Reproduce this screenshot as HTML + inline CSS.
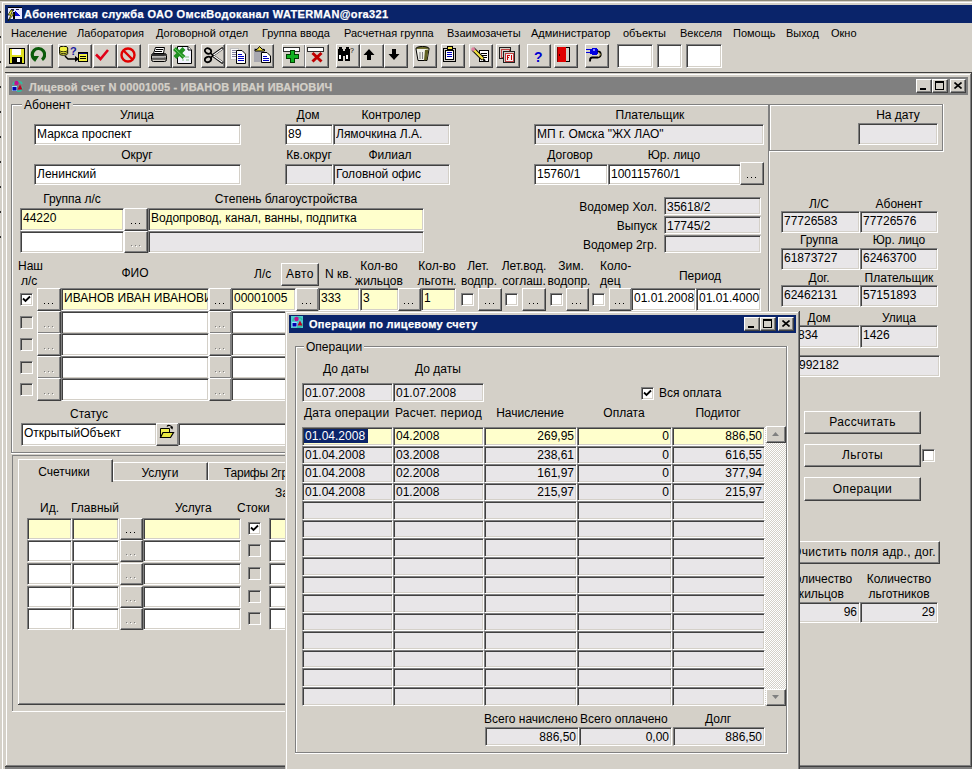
<!DOCTYPE html>
<html><head><meta charset="utf-8"><style>
*{margin:0;padding:0;box-sizing:border-box}
html,body{width:972px;height:769px;overflow:hidden}
body{position:relative;background:#d4d0c8;font-family:"Liberation Sans",sans-serif;font-size:12px;color:#000}
body div, body svg{position:absolute}
.t{white-space:nowrap}
.ed{border-style:solid;border-width:1px;border-color:#808080 #fff #fff #808080;box-shadow:inset 1px 1px #404040, inset -1px -1px #d4d0c8;overflow:hidden}
.ed span{position:absolute}
.bt{background:#d4d0c8;border-style:solid;border-width:1px;border-color:#fff #404040 #404040 #fff;box-shadow:inset -1px -1px #808080}
.cb{width:13px;height:13px;border-style:solid;border-width:1px;border-color:#808080 #fff #fff #808080;box-shadow:inset 1px 1px #404040, inset -1px -1px #d4d0c8}
</style></head><body>
<div style="left:0px;top:0px;width:972px;height:1px;background:#8c8878"></div>
<div style="left:1px;top:1px;width:971px;height:1px;background:#d4d0c8"></div>
<div style="left:2px;top:2px;width:970px;height:1px;background:#ffffff"></div>
<div style="left:1px;top:1px;width:1px;height:768px;background:#d4d0c8"></div>
<div style="left:2px;top:2px;width:1px;height:767px;background:#ffffff"></div>
<div style="left:0px;top:11px;width:1px;height:2px;background:#303030"></div>
<div style="left:0px;top:36px;width:1px;height:2px;background:#303030"></div>
<div style="left:0px;top:61px;width:1px;height:2px;background:#303030"></div>
<div style="left:0px;top:86px;width:1px;height:2px;background:#303030"></div>
<div style="left:0px;top:111px;width:1px;height:2px;background:#303030"></div>
<div style="left:0px;top:136px;width:1px;height:2px;background:#303030"></div>
<div style="left:0px;top:161px;width:1px;height:2px;background:#303030"></div>
<div style="left:0px;top:186px;width:1px;height:2px;background:#303030"></div>
<div style="left:0px;top:211px;width:1px;height:2px;background:#303030"></div>
<div style="left:0px;top:236px;width:1px;height:2px;background:#303030"></div>
<div style="left:5px;top:5px;width:967px;height:18px;background:#0a246a"></div>
<div class="t" style="left:24px;top:8px;font-size:11px;line-height:13px;color:#fff;font-weight:bold;-webkit-text-stroke:0.25px #fff;letter-spacing:0.38px">Абонентская служба ОАО ОмскВодоканал WATERMAN@ora321</div>
<div class="t" style="left:11px;top:27px;font-size:11px;line-height:13px;color:#000;">Население</div>
<div class="t" style="left:77px;top:27px;font-size:11px;line-height:13px;color:#000;">Лаборатория</div>
<div class="t" style="left:156px;top:27px;font-size:11px;line-height:13px;color:#000;">Договорной отдел</div>
<div class="t" style="left:262px;top:27px;font-size:11px;line-height:13px;color:#000;">Группа ввода</div>
<div class="t" style="left:344px;top:27px;font-size:11px;line-height:13px;color:#000;">Расчетная группа</div>
<div class="t" style="left:447px;top:27px;font-size:11px;line-height:13px;color:#000;">Взаимозачеты</div>
<div class="t" style="left:531px;top:27px;font-size:11px;line-height:13px;color:#000;">Администратор</div>
<div class="t" style="left:623px;top:27px;font-size:11px;line-height:13px;color:#000;">объекты</div>
<div class="t" style="left:680px;top:27px;font-size:11px;line-height:13px;color:#000;">Векселя</div>
<div class="t" style="left:733px;top:27px;font-size:11px;line-height:13px;color:#000;">Помощь</div>
<div class="t" style="left:786px;top:27px;font-size:11px;line-height:13px;color:#000;">Выход</div>
<div class="t" style="left:831px;top:27px;font-size:11px;line-height:13px;color:#000;">Окно</div>
<div class="bt" style="left:5px;top:44px;width:24px;height:24px"></div>
<div class="bt" style="left:29px;top:44px;width:24px;height:24px"></div>
<div class="bt" style="left:58px;top:44px;width:34px;height:24px"></div>
<div class="bt" style="left:93px;top:44px;width:24px;height:24px"></div>
<div class="bt" style="left:117px;top:44px;width:24px;height:24px"></div>
<div class="bt" style="left:148px;top:44px;width:24px;height:24px"></div>
<div class="bt" style="left:172px;top:44px;width:24px;height:24px"></div>
<div class="bt" style="left:201px;top:44px;width:24px;height:24px"></div>
<div class="bt" style="left:226px;top:44px;width:24px;height:24px"></div>
<div class="bt" style="left:250px;top:44px;width:24px;height:24px"></div>
<div class="bt" style="left:282px;top:44px;width:24px;height:24px"></div>
<div class="bt" style="left:305px;top:44px;width:24px;height:24px"></div>
<div class="bt" style="left:336px;top:44px;width:24px;height:24px"></div>
<div class="bt" style="left:360px;top:44px;width:24px;height:24px"></div>
<div class="bt" style="left:384px;top:44px;width:24px;height:24px"></div>
<div class="bt" style="left:413px;top:44px;width:24px;height:24px"></div>
<div class="bt" style="left:441px;top:44px;width:24px;height:24px"></div>
<div class="bt" style="left:469px;top:44px;width:24px;height:24px"></div>
<div class="bt" style="left:496px;top:44px;width:24px;height:24px"></div>
<div class="bt" style="left:527px;top:44px;width:24px;height:24px"></div>
<div class="bt" style="left:554px;top:44px;width:24px;height:24px"></div>
<div class="bt" style="left:585px;top:44px;width:24px;height:24px"></div>
<div class="ed" style="left:617px;top:44px;width:36px;height:24px;background:#ffffff"></div>
<div class="ed" style="left:657px;top:44px;width:25px;height:24px;background:#ffffff"></div>
<div class="ed" style="left:686px;top:44px;width:36px;height:24px;background:#ffffff"></div>
<div style="left:5px;top:72px;width:967px;height:1px;background:#404040"></div>
<div style="left:5px;top:767px;width:967px;height:2px;background:#808080"></div>
<div style="left:5px;top:73px;width:967px;height:1px;background:#d4d0c8"></div>
<div style="left:5px;top:73px;width:1px;height:694px;background:#d4d0c8"></div>
<div style="left:6px;top:74px;width:965px;height:1px;background:#ffffff"></div>
<div style="left:6px;top:74px;width:1px;height:692px;background:#ffffff"></div>
<div style="left:5px;top:766px;width:967px;height:1px;background:#404040"></div>
<div style="left:971px;top:73px;width:1px;height:694px;background:#404040"></div>
<div style="left:6px;top:765px;width:965px;height:1px;background:#808080"></div>
<div style="left:970px;top:74px;width:1px;height:692px;background:#808080"></div>
<div style="left:7px;top:75px;width:963px;height:1px;background:#d4d0c8"></div>
<div style="left:9px;top:77px;width:959px;height:18px;background:#808080"></div>
<div class="t" style="left:29px;top:81px;font-size:11px;line-height:13px;color:#d4d0c8;font-weight:bold;-webkit-text-stroke:0.25px #d4d0c8;letter-spacing:0.18px">Лицевой счет N 00001005 - ИВАНОВ ИВАН ИВАНОВИЧ</div>
<div class="bt" style="left:916px;top:79px;width:16px;height:14px"></div>
<div style="left:920px;top:88px;width:6px;height:2px;background:#000"></div>
<div class="bt" style="left:932px;top:79px;width:16px;height:14px"></div>
<div style="left:935px;top:81px;width:9px;height:2px;background:#000"></div>
<div style="left:935px;top:81px;width:1px;height:9px;background:#000"></div>
<div style="left:943px;top:81px;width:1px;height:9px;background:#000"></div>
<div style="left:935px;top:89px;width:9px;height:1px;background:#000"></div>
<div class="bt" style="left:950px;top:79px;width:16px;height:14px"></div>
<svg style="position:absolute;left:954px;top:82px" width="8" height="7" viewBox="0 0 8 7"><path d="M0.5 0.5 L7.5 6.5 M7.5 0.5 L0.5 6.5" stroke="#000" stroke-width="1.6" fill="none"/></svg>
<div style="left:11px;top:104px;width:758px;height:1px;background:#808080"></div>
<div style="left:11px;top:104px;width:1px;height:349px;background:#808080"></div>
<div style="left:11px;top:452px;width:758px;height:1px;background:#808080"></div>
<div style="left:768px;top:104px;width:1px;height:349px;background:#808080"></div>
<div style="left:12px;top:105px;width:756px;height:1px;background:#ffffff"></div>
<div style="left:12px;top:105px;width:1px;height:347px;background:#ffffff"></div>
<div style="left:11px;top:453px;width:759px;height:1px;background:#ffffff"></div>
<div style="left:769px;top:104px;width:1px;height:350px;background:#ffffff"></div>
<div class="t" style="left:22px;top:98px;padding:0 2px;background:#d4d0c8;font-size:12px;line-height:14px">Абонент</div>
<div class="t" style="left:-13px;width:300px;text-align:center;top:108px;font-size:12px;line-height:14px;color:#000;">Улица</div>
<div class="ed" style="left:34px;top:124px;width:207px;height:21px;background:#ffffff"><span style="position:absolute;left:2px;right:0;top:2px;height:14px;line-height:14px;text-align:left;white-space:nowrap;overflow:hidden;padding-right:0px;font-size:12px;">Маркса проспект</span></div>
<div class="t" style="left:-13px;width:300px;text-align:center;top:148px;font-size:12px;line-height:14px;color:#000;">Округ</div>
<div class="ed" style="left:34px;top:164px;width:207px;height:21px;background:#ffffff"><span style="position:absolute;left:2px;right:0;top:2px;height:14px;line-height:14px;text-align:left;white-space:nowrap;overflow:hidden;padding-right:0px;font-size:12px;">Ленинский</span></div>
<div class="t" style="left:158px;width:300px;text-align:center;top:108px;font-size:12px;line-height:14px;color:#000;">Дом</div>
<div class="ed" style="left:285px;top:124px;width:48px;height:21px;background:#ffffff"><span style="position:absolute;left:2px;right:0;top:2px;height:14px;line-height:14px;text-align:left;white-space:nowrap;overflow:hidden;padding-right:0px;font-size:12px;">89</span></div>
<div class="t" style="left:241px;width:300px;text-align:center;top:108px;font-size:12px;line-height:14px;color:#000;">Контролер</div>
<div class="ed" style="left:333px;top:124px;width:117px;height:21px;background:#e8e6e8"><span style="position:absolute;left:2px;right:0;top:2px;height:14px;line-height:14px;text-align:left;white-space:nowrap;overflow:hidden;padding-right:0px;font-size:12px;">Лямочкина Л.А.</span></div>
<div class="t" style="left:159px;width:300px;text-align:center;top:148px;font-size:12px;line-height:14px;color:#000;">Кв.округ</div>
<div class="ed" style="left:285px;top:164px;width:48px;height:21px;background:#e8e6e8"></div>
<div class="t" style="left:240px;width:300px;text-align:center;top:148px;font-size:12px;line-height:14px;color:#000;">Филиал</div>
<div class="ed" style="left:333px;top:164px;width:117px;height:21px;background:#e8e6e8"><span style="position:absolute;left:2px;right:0;top:2px;height:14px;line-height:14px;text-align:left;white-space:nowrap;overflow:hidden;padding-right:0px;font-size:12px;">Головной офис</span></div>
<div class="t" style="left:500px;width:300px;text-align:center;top:108px;font-size:12px;line-height:14px;color:#000;">Плательщик</div>
<div class="ed" style="left:534px;top:124px;width:230px;height:21px;background:#e8e6e8"><span style="position:absolute;left:2px;right:0;top:2px;height:14px;line-height:14px;text-align:left;white-space:nowrap;overflow:hidden;padding-right:0px;font-size:12px;">МП г. Омска &quot;ЖХ ЛАО&quot;</span></div>
<div class="t" style="left:420px;width:300px;text-align:center;top:148px;font-size:12px;line-height:14px;color:#000;">Договор</div>
<div class="ed" style="left:534px;top:164px;width:74px;height:21px;background:#ffffff"><span style="position:absolute;left:2px;right:0;top:2px;height:14px;line-height:14px;text-align:left;white-space:nowrap;overflow:hidden;padding-right:0px;font-size:12px;">15760/1</span></div>
<div class="t" style="left:524px;width:300px;text-align:center;top:148px;font-size:12px;line-height:14px;color:#000;">Юр. лицо</div>
<div class="ed" style="left:608px;top:164px;width:133px;height:21px;background:#ffffff"><span style="position:absolute;left:2px;right:0;top:2px;height:14px;line-height:14px;text-align:left;white-space:nowrap;overflow:hidden;padding-right:0px;font-size:12px;">100115760/1</span></div>
<div class="bt" style="left:740px;top:162px;width:24px;height:23px"></div>
<div style="left:747px;top:177px;width:1px;height:1px;background:#000"></div>
<div style="left:751px;top:177px;width:1px;height:1px;background:#000"></div>
<div style="left:755px;top:177px;width:1px;height:1px;background:#000"></div>
<div style="left:769px;top:104px;width:175px;height:48px;background:#d4d0c8"></div>
<div style="left:769px;top:104px;width:174px;height:1px;background:#808080"></div>
<div style="left:769px;top:104px;width:1px;height:47px;background:#808080"></div>
<div style="left:769px;top:150px;width:174px;height:1px;background:#808080"></div>
<div style="left:942px;top:104px;width:1px;height:47px;background:#808080"></div>
<div style="left:770px;top:105px;width:172px;height:1px;background:#ffffff"></div>
<div style="left:770px;top:105px;width:1px;height:45px;background:#ffffff"></div>
<div style="left:769px;top:151px;width:175px;height:1px;background:#ffffff"></div>
<div style="left:943px;top:104px;width:1px;height:48px;background:#ffffff"></div>
<div class="t" style="left:748px;width:300px;text-align:center;top:108px;font-size:12px;line-height:14px;color:#000;">На дату</div>
<div class="ed" style="left:858px;top:123px;width:80px;height:22px;background:#e8e6e8"></div>
<div class="t" style="left:-78px;width:300px;text-align:center;top:192px;font-size:12px;line-height:14px;color:#000;">Группа л/с</div>
<div class="t" style="left:136px;width:300px;text-align:center;top:192px;font-size:12px;line-height:14px;color:#000;">Степень благоустройства</div>
<div class="ed" style="left:20px;top:208px;width:104px;height:23px;background:#ffffcc"><span style="position:absolute;left:2px;right:0;top:2px;height:14px;line-height:14px;text-align:left;white-space:nowrap;overflow:hidden;padding-right:0px;font-size:12px;">44220</span></div>
<div class="bt" style="left:124px;top:208px;width:24px;height:23px"></div>
<div style="left:131px;top:223px;width:1px;height:1px;background:#000"></div>
<div style="left:135px;top:223px;width:1px;height:1px;background:#000"></div>
<div style="left:139px;top:223px;width:1px;height:1px;background:#000"></div>
<div class="ed" style="left:148px;top:208px;width:276px;height:23px;background:#ffffcc"><span style="position:absolute;left:2px;right:0;top:2px;height:14px;line-height:14px;text-align:left;white-space:nowrap;overflow:hidden;padding-right:0px;font-size:12px;">Водопровод, канал, ванны, подпитка</span></div>
<div class="ed" style="left:20px;top:231px;width:104px;height:22px;background:#ffffff"></div>
<div class="bt" style="left:124px;top:231px;width:24px;height:22px"></div>
<div style="left:131px;top:245px;width:1px;height:1px;background:#808080"></div>
<div style="left:132px;top:246px;width:1px;height:1px;background:#fff"></div>
<div style="left:135px;top:245px;width:1px;height:1px;background:#808080"></div>
<div style="left:136px;top:246px;width:1px;height:1px;background:#fff"></div>
<div style="left:139px;top:245px;width:1px;height:1px;background:#808080"></div>
<div style="left:140px;top:246px;width:1px;height:1px;background:#fff"></div>
<div class="ed" style="left:148px;top:231px;width:276px;height:22px;background:#e8e6e8"></div>
<div class="t" style="left:357px;width:300px;text-align:right;top:200px;font-size:12px;line-height:14px;color:#000;">Водомер Хол.</div>
<div class="ed" style="left:664px;top:197px;width:97px;height:18px;background:#e8e6e8"><span style="position:absolute;left:2px;right:0;top:2px;height:14px;line-height:14px;text-align:left;white-space:nowrap;overflow:hidden;padding-right:0px;font-size:12px;">35618/2</span></div>
<div class="t" style="left:357px;width:300px;text-align:right;top:219px;font-size:12px;line-height:14px;color:#000;">Выпуск</div>
<div class="ed" style="left:664px;top:216px;width:97px;height:18px;background:#e8e6e8"><span style="position:absolute;left:2px;right:0;top:2px;height:14px;line-height:14px;text-align:left;white-space:nowrap;overflow:hidden;padding-right:0px;font-size:12px;">17745/2</span></div>
<div class="t" style="left:357px;width:300px;text-align:right;top:238px;font-size:12px;line-height:14px;color:#000;">Водомер 2гр.</div>
<div class="ed" style="left:664px;top:235px;width:97px;height:18px;background:#e8e6e8"></div>
<div class="t" style="left:18px;top:259px;font-size:12px;line-height:14px;color:#000;">Наш</div>
<div class="t" style="left:21px;top:274px;font-size:12px;line-height:14px;color:#000;">л/с</div>
<div class="t" style="left:-15px;width:300px;text-align:center;top:266px;font-size:12px;line-height:14px;color:#000;">ФИО</div>
<div class="t" style="left:254px;top:267px;font-size:12px;line-height:14px;color:#000;">Л/с</div>
<div class="bt" style="left:281px;top:263px;width:38px;height:23px"><span style="position:absolute;left:0;right:0;top:0;height:21px;line-height:21px;text-align:center;white-space:nowrap;color:#000;font-size:12px;letter-spacing:0.4px">Авто</span></div>
<div class="t" style="left:325px;top:267px;font-size:12px;line-height:14px;color:#000;">N кв.</div>
<div class="t" style="left:229px;width:300px;text-align:center;top:259px;font-size:12px;line-height:14px;color:#000;">Кол-во</div>
<div class="t" style="left:229px;width:300px;text-align:center;top:274px;font-size:12px;line-height:14px;color:#000;">жильцов</div>
<div class="t" style="left:287px;width:300px;text-align:center;top:259px;font-size:12px;line-height:14px;color:#000;">Кол-во</div>
<div class="t" style="left:287px;width:300px;text-align:center;top:274px;font-size:12px;line-height:14px;color:#000;">льготн.</div>
<div class="t" style="left:328px;width:300px;text-align:center;top:259px;font-size:12px;line-height:14px;color:#000;">Лет.</div>
<div class="t" style="left:329px;width:300px;text-align:center;top:274px;font-size:12px;line-height:14px;color:#000;">водпр.</div>
<div class="t" style="left:374px;width:300px;text-align:center;top:259px;font-size:12px;line-height:14px;color:#000;">Лет.вод.</div>
<div class="t" style="left:374px;width:300px;text-align:center;top:274px;font-size:12px;line-height:14px;color:#000;">соглаш.</div>
<div class="t" style="left:421px;width:300px;text-align:center;top:259px;font-size:12px;line-height:14px;color:#000;">Зим.</div>
<div class="t" style="left:419px;width:300px;text-align:center;top:274px;font-size:12px;line-height:14px;color:#000;">водопр.</div>
<div class="t" style="left:600px;top:259px;font-size:12px;line-height:14px;color:#000;">Коло-</div>
<div class="t" style="left:600px;top:274px;font-size:12px;line-height:14px;color:#000;">дец</div>
<div class="t" style="left:550px;width:300px;text-align:center;top:269px;font-size:12px;line-height:14px;color:#000;">Период</div>
<div class="cb" style="left:20px;top:293px;background:#ffffff"></div>
<svg style="position:absolute;left:22px;top:295px" width="9" height="9" viewBox="0 0 9 9"><path d="M1 3.5 L3.5 6 L8 1.5" stroke="#000" stroke-width="1.8" fill="none"/></svg>
<div class="bt" style="left:37px;top:288px;width:24px;height:23px"></div>
<div style="left:44px;top:303px;width:1px;height:1px;background:#000"></div>
<div style="left:48px;top:303px;width:1px;height:1px;background:#000"></div>
<div style="left:52px;top:303px;width:1px;height:1px;background:#000"></div>
<div class="ed" style="left:61px;top:288px;width:148px;height:23px;background:#ffffcc"><span style="position:absolute;left:2px;right:0;top:2px;height:14px;line-height:14px;text-align:left;white-space:nowrap;overflow:hidden;padding-right:0px;font-size:12px;">ИВАНОВ ИВАН ИВАНОВИЧ</span></div>
<div class="bt" style="left:209px;top:288px;width:23px;height:23px"></div>
<div style="left:215px;top:303px;width:1px;height:1px;background:#000"></div>
<div style="left:219px;top:303px;width:1px;height:1px;background:#000"></div>
<div style="left:223px;top:303px;width:1px;height:1px;background:#000"></div>
<div class="ed" style="left:231px;top:288px;width:65px;height:23px;background:#ffffcc"><span style="position:absolute;left:2px;right:0;top:2px;height:14px;line-height:14px;text-align:left;white-space:nowrap;overflow:hidden;padding-right:0px;font-size:12px;">00001005</span></div>
<div class="bt" style="left:296px;top:288px;width:23px;height:23px"></div>
<div style="left:302px;top:303px;width:1px;height:1px;background:#000"></div>
<div style="left:306px;top:303px;width:1px;height:1px;background:#000"></div>
<div style="left:310px;top:303px;width:1px;height:1px;background:#000"></div>
<div class="ed" style="left:318px;top:288px;width:42px;height:23px;background:#ffffcc"><span style="position:absolute;left:2px;right:0;top:2px;height:14px;line-height:14px;text-align:left;white-space:nowrap;overflow:hidden;padding-right:0px;font-size:12px;">333</span></div>
<div class="ed" style="left:360px;top:288px;width:39px;height:23px;background:#ffffcc"><span style="position:absolute;left:2px;right:0;top:2px;height:14px;line-height:14px;text-align:left;white-space:nowrap;overflow:hidden;padding-right:0px;font-size:12px;">3</span></div>
<div class="bt" style="left:398px;top:288px;width:23px;height:23px"></div>
<div style="left:404px;top:303px;width:1px;height:1px;background:#000"></div>
<div style="left:408px;top:303px;width:1px;height:1px;background:#000"></div>
<div style="left:412px;top:303px;width:1px;height:1px;background:#000"></div>
<div class="ed" style="left:421px;top:288px;width:35px;height:23px;background:#ffffcc"><span style="position:absolute;left:2px;right:0;top:2px;height:14px;line-height:14px;text-align:left;white-space:nowrap;overflow:hidden;padding-right:0px;font-size:12px;">1</span></div>
<div class="cb" style="left:461px;top:293px;background:#ffffff"></div>
<div class="bt" style="left:478px;top:288px;width:24px;height:23px"></div>
<div style="left:485px;top:303px;width:1px;height:1px;background:#000"></div>
<div style="left:489px;top:303px;width:1px;height:1px;background:#000"></div>
<div style="left:493px;top:303px;width:1px;height:1px;background:#000"></div>
<div class="cb" style="left:505px;top:293px;background:#ffffff"></div>
<div class="bt" style="left:522px;top:288px;width:24px;height:23px"></div>
<div style="left:529px;top:303px;width:1px;height:1px;background:#000"></div>
<div style="left:533px;top:303px;width:1px;height:1px;background:#000"></div>
<div style="left:537px;top:303px;width:1px;height:1px;background:#000"></div>
<div class="cb" style="left:550px;top:293px;background:#ffffff"></div>
<div class="bt" style="left:566px;top:288px;width:23px;height:23px"></div>
<div style="left:572px;top:303px;width:1px;height:1px;background:#000"></div>
<div style="left:576px;top:303px;width:1px;height:1px;background:#000"></div>
<div style="left:580px;top:303px;width:1px;height:1px;background:#000"></div>
<div class="cb" style="left:592px;top:293px;background:#ffffff"></div>
<div class="bt" style="left:609px;top:288px;width:23px;height:23px"></div>
<div style="left:615px;top:303px;width:1px;height:1px;background:#000"></div>
<div style="left:619px;top:303px;width:1px;height:1px;background:#000"></div>
<div style="left:623px;top:303px;width:1px;height:1px;background:#000"></div>
<div class="ed" style="left:631px;top:288px;width:65px;height:23px;background:#ffffff"><span style="position:absolute;left:2px;right:0;top:2px;height:14px;line-height:14px;text-align:left;white-space:nowrap;overflow:hidden;padding-right:0px;font-size:12px;">01.01.2008</span></div>
<div class="ed" style="left:696px;top:288px;width:65px;height:23px;background:#ffffff"><span style="position:absolute;left:2px;right:0;top:2px;height:14px;line-height:14px;text-align:left;white-space:nowrap;overflow:hidden;padding-right:0px;font-size:12px;">01.01.4000</span></div>
<div class="cb" style="left:20px;top:316px;background:#d4d0c8"></div>
<div class="bt" style="left:37px;top:311px;width:24px;height:23px"></div>
<div style="left:44px;top:326px;width:1px;height:1px;background:#808080"></div>
<div style="left:45px;top:327px;width:1px;height:1px;background:#fff"></div>
<div style="left:48px;top:326px;width:1px;height:1px;background:#808080"></div>
<div style="left:49px;top:327px;width:1px;height:1px;background:#fff"></div>
<div style="left:52px;top:326px;width:1px;height:1px;background:#808080"></div>
<div style="left:53px;top:327px;width:1px;height:1px;background:#fff"></div>
<div class="ed" style="left:61px;top:311px;width:148px;height:23px;background:#ffffff"></div>
<div class="bt" style="left:209px;top:311px;width:23px;height:23px"></div>
<div style="left:215px;top:326px;width:1px;height:1px;background:#808080"></div>
<div style="left:216px;top:327px;width:1px;height:1px;background:#fff"></div>
<div style="left:219px;top:326px;width:1px;height:1px;background:#808080"></div>
<div style="left:220px;top:327px;width:1px;height:1px;background:#fff"></div>
<div style="left:223px;top:326px;width:1px;height:1px;background:#808080"></div>
<div style="left:224px;top:327px;width:1px;height:1px;background:#fff"></div>
<div class="ed" style="left:231px;top:311px;width:65px;height:23px;background:#ffffff"></div>
<div class="bt" style="left:296px;top:311px;width:23px;height:23px"></div>
<div style="left:302px;top:326px;width:1px;height:1px;background:#808080"></div>
<div style="left:303px;top:327px;width:1px;height:1px;background:#fff"></div>
<div style="left:306px;top:326px;width:1px;height:1px;background:#808080"></div>
<div style="left:307px;top:327px;width:1px;height:1px;background:#fff"></div>
<div style="left:310px;top:326px;width:1px;height:1px;background:#808080"></div>
<div style="left:311px;top:327px;width:1px;height:1px;background:#fff"></div>
<div class="ed" style="left:318px;top:311px;width:42px;height:23px;background:#ffffff"></div>
<div class="cb" style="left:20px;top:338px;background:#d4d0c8"></div>
<div class="bt" style="left:37px;top:333px;width:24px;height:23px"></div>
<div style="left:44px;top:348px;width:1px;height:1px;background:#808080"></div>
<div style="left:45px;top:349px;width:1px;height:1px;background:#fff"></div>
<div style="left:48px;top:348px;width:1px;height:1px;background:#808080"></div>
<div style="left:49px;top:349px;width:1px;height:1px;background:#fff"></div>
<div style="left:52px;top:348px;width:1px;height:1px;background:#808080"></div>
<div style="left:53px;top:349px;width:1px;height:1px;background:#fff"></div>
<div class="ed" style="left:61px;top:333px;width:148px;height:23px;background:#ffffff"></div>
<div class="bt" style="left:209px;top:333px;width:23px;height:23px"></div>
<div style="left:215px;top:348px;width:1px;height:1px;background:#808080"></div>
<div style="left:216px;top:349px;width:1px;height:1px;background:#fff"></div>
<div style="left:219px;top:348px;width:1px;height:1px;background:#808080"></div>
<div style="left:220px;top:349px;width:1px;height:1px;background:#fff"></div>
<div style="left:223px;top:348px;width:1px;height:1px;background:#808080"></div>
<div style="left:224px;top:349px;width:1px;height:1px;background:#fff"></div>
<div class="ed" style="left:231px;top:333px;width:65px;height:23px;background:#ffffff"></div>
<div class="bt" style="left:296px;top:333px;width:23px;height:23px"></div>
<div style="left:302px;top:348px;width:1px;height:1px;background:#808080"></div>
<div style="left:303px;top:349px;width:1px;height:1px;background:#fff"></div>
<div style="left:306px;top:348px;width:1px;height:1px;background:#808080"></div>
<div style="left:307px;top:349px;width:1px;height:1px;background:#fff"></div>
<div style="left:310px;top:348px;width:1px;height:1px;background:#808080"></div>
<div style="left:311px;top:349px;width:1px;height:1px;background:#fff"></div>
<div class="ed" style="left:318px;top:333px;width:42px;height:23px;background:#ffffff"></div>
<div class="cb" style="left:20px;top:361px;background:#d4d0c8"></div>
<div class="bt" style="left:37px;top:356px;width:24px;height:23px"></div>
<div style="left:44px;top:371px;width:1px;height:1px;background:#808080"></div>
<div style="left:45px;top:372px;width:1px;height:1px;background:#fff"></div>
<div style="left:48px;top:371px;width:1px;height:1px;background:#808080"></div>
<div style="left:49px;top:372px;width:1px;height:1px;background:#fff"></div>
<div style="left:52px;top:371px;width:1px;height:1px;background:#808080"></div>
<div style="left:53px;top:372px;width:1px;height:1px;background:#fff"></div>
<div class="ed" style="left:61px;top:356px;width:148px;height:23px;background:#ffffff"></div>
<div class="bt" style="left:209px;top:356px;width:23px;height:23px"></div>
<div style="left:215px;top:371px;width:1px;height:1px;background:#808080"></div>
<div style="left:216px;top:372px;width:1px;height:1px;background:#fff"></div>
<div style="left:219px;top:371px;width:1px;height:1px;background:#808080"></div>
<div style="left:220px;top:372px;width:1px;height:1px;background:#fff"></div>
<div style="left:223px;top:371px;width:1px;height:1px;background:#808080"></div>
<div style="left:224px;top:372px;width:1px;height:1px;background:#fff"></div>
<div class="ed" style="left:231px;top:356px;width:65px;height:23px;background:#ffffff"></div>
<div class="bt" style="left:296px;top:356px;width:23px;height:23px"></div>
<div style="left:302px;top:371px;width:1px;height:1px;background:#808080"></div>
<div style="left:303px;top:372px;width:1px;height:1px;background:#fff"></div>
<div style="left:306px;top:371px;width:1px;height:1px;background:#808080"></div>
<div style="left:307px;top:372px;width:1px;height:1px;background:#fff"></div>
<div style="left:310px;top:371px;width:1px;height:1px;background:#808080"></div>
<div style="left:311px;top:372px;width:1px;height:1px;background:#fff"></div>
<div class="ed" style="left:318px;top:356px;width:42px;height:23px;background:#ffffff"></div>
<div class="cb" style="left:20px;top:383px;background:#d4d0c8"></div>
<div class="bt" style="left:37px;top:378px;width:24px;height:23px"></div>
<div style="left:44px;top:393px;width:1px;height:1px;background:#808080"></div>
<div style="left:45px;top:394px;width:1px;height:1px;background:#fff"></div>
<div style="left:48px;top:393px;width:1px;height:1px;background:#808080"></div>
<div style="left:49px;top:394px;width:1px;height:1px;background:#fff"></div>
<div style="left:52px;top:393px;width:1px;height:1px;background:#808080"></div>
<div style="left:53px;top:394px;width:1px;height:1px;background:#fff"></div>
<div class="ed" style="left:61px;top:378px;width:148px;height:23px;background:#ffffff"></div>
<div class="bt" style="left:209px;top:378px;width:23px;height:23px"></div>
<div style="left:215px;top:393px;width:1px;height:1px;background:#808080"></div>
<div style="left:216px;top:394px;width:1px;height:1px;background:#fff"></div>
<div style="left:219px;top:393px;width:1px;height:1px;background:#808080"></div>
<div style="left:220px;top:394px;width:1px;height:1px;background:#fff"></div>
<div style="left:223px;top:393px;width:1px;height:1px;background:#808080"></div>
<div style="left:224px;top:394px;width:1px;height:1px;background:#fff"></div>
<div class="ed" style="left:231px;top:378px;width:65px;height:23px;background:#ffffff"></div>
<div class="bt" style="left:296px;top:378px;width:23px;height:23px"></div>
<div style="left:302px;top:393px;width:1px;height:1px;background:#808080"></div>
<div style="left:303px;top:394px;width:1px;height:1px;background:#fff"></div>
<div style="left:306px;top:393px;width:1px;height:1px;background:#808080"></div>
<div style="left:307px;top:394px;width:1px;height:1px;background:#fff"></div>
<div style="left:310px;top:393px;width:1px;height:1px;background:#808080"></div>
<div style="left:311px;top:394px;width:1px;height:1px;background:#fff"></div>
<div class="ed" style="left:318px;top:378px;width:42px;height:23px;background:#ffffff"></div>
<div class="t" style="left:-61px;width:300px;text-align:center;top:407px;font-size:12px;line-height:14px;color:#000;">Статус</div>
<div class="ed" style="left:21px;top:423px;width:136px;height:23px;background:#ffffff"><span style="position:absolute;left:2px;right:0;top:2px;height:14px;line-height:14px;text-align:left;white-space:nowrap;overflow:hidden;padding-right:0px;font-size:12px;">ОткрытыйОбъект</span></div>
<div class="bt" style="left:156px;top:423px;width:23px;height:23px"></div>
<div class="ed" style="left:178px;top:423px;width:323px;height:23px;background:#ffffff"></div>
<div class="t" style="left:669px;width:300px;text-align:center;top:197px;font-size:12px;line-height:14px;color:#000;">Л/С</div>
<div class="t" style="left:749px;width:300px;text-align:center;top:197px;font-size:12px;line-height:14px;color:#000;">Абонент</div>
<div class="ed" style="left:781px;top:211px;width:79px;height:22px;background:#e8e6e8"><span style="position:absolute;left:2px;right:0;top:2px;height:14px;line-height:14px;text-align:left;white-space:nowrap;overflow:hidden;padding-right:0px;font-size:12px;">77726583</span></div>
<div class="ed" style="left:860px;top:211px;width:78px;height:22px;background:#e8e6e8"><span style="position:absolute;left:2px;right:0;top:2px;height:14px;line-height:14px;text-align:left;white-space:nowrap;overflow:hidden;padding-right:0px;font-size:12px;">77726576</span></div>
<div class="t" style="left:669px;width:300px;text-align:center;top:233px;font-size:12px;line-height:14px;color:#000;">Группа</div>
<div class="t" style="left:749px;width:300px;text-align:center;top:233px;font-size:12px;line-height:14px;color:#000;">Юр. лицо</div>
<div class="ed" style="left:781px;top:248px;width:79px;height:22px;background:#e8e6e8"><span style="position:absolute;left:2px;right:0;top:2px;height:14px;line-height:14px;text-align:left;white-space:nowrap;overflow:hidden;padding-right:0px;font-size:12px;">61873727</span></div>
<div class="ed" style="left:860px;top:248px;width:78px;height:22px;background:#e8e6e8"><span style="position:absolute;left:2px;right:0;top:2px;height:14px;line-height:14px;text-align:left;white-space:nowrap;overflow:hidden;padding-right:0px;font-size:12px;">62463700</span></div>
<div class="t" style="left:669px;width:300px;text-align:center;top:271px;font-size:12px;line-height:14px;color:#000;">Дог.</div>
<div class="t" style="left:749px;width:300px;text-align:center;top:271px;font-size:12px;line-height:14px;color:#000;">Плательщик</div>
<div class="ed" style="left:781px;top:285px;width:79px;height:22px;background:#e8e6e8"><span style="position:absolute;left:2px;right:0;top:2px;height:14px;line-height:14px;text-align:left;white-space:nowrap;overflow:hidden;padding-right:0px;font-size:12px;">62462131</span></div>
<div class="ed" style="left:860px;top:285px;width:78px;height:22px;background:#e8e6e8"><span style="position:absolute;left:2px;right:0;top:2px;height:14px;line-height:14px;text-align:left;white-space:nowrap;overflow:hidden;padding-right:0px;font-size:12px;">57151893</span></div>
<div class="t" style="left:669px;width:300px;text-align:center;top:311px;font-size:12px;line-height:14px;color:#000;">Дом</div>
<div class="t" style="left:749px;width:300px;text-align:center;top:311px;font-size:12px;line-height:14px;color:#000;">Улица</div>
<div class="ed" style="left:781px;top:325px;width:79px;height:23px;background:#e8e6e8"><span style="position:absolute;left:16px;right:0;top:2px;height:14px;line-height:14px;text-align:left;white-space:nowrap;overflow:hidden;padding-right:0px;font-size:12px;">834</span></div>
<div class="ed" style="left:860px;top:325px;width:78px;height:23px;background:#e8e6e8"><span style="position:absolute;left:2px;right:0;top:2px;height:14px;line-height:14px;text-align:left;white-space:nowrap;overflow:hidden;padding-right:0px;font-size:12px;">1426</span></div>
<div class="ed" style="left:781px;top:355px;width:159px;height:22px;background:#e8e6e8"><span style="position:absolute;left:17px;right:0;top:2px;height:14px;line-height:14px;text-align:left;white-space:nowrap;overflow:hidden;padding-right:0px;font-size:12px;">992182</span></div>
<div class="bt" style="left:804px;top:411px;width:117px;height:23px"><span style="position:absolute;left:0;right:0;top:0;height:21px;line-height:21px;text-align:center;white-space:nowrap;color:#000;font-size:12px;letter-spacing:0.4px">Рассчитать</span></div>
<div class="bt" style="left:804px;top:444px;width:117px;height:23px"><span style="position:absolute;left:0;right:0;top:0;height:21px;line-height:21px;text-align:center;white-space:nowrap;color:#000;font-size:12px;letter-spacing:0.4px">Льготы</span></div>
<div class="cb" style="left:922px;top:449px;background:#ffffff"></div>
<div class="bt" style="left:804px;top:477px;width:117px;height:24px"><span style="position:absolute;left:0;right:0;top:0;height:22px;line-height:22px;text-align:center;white-space:nowrap;color:#000;font-size:12px;letter-spacing:0.4px">Операции</span></div>
<div class="bt" style="left:781px;top:541px;width:159px;height:23px"><span style="position:absolute;left:0;right:0;top:0;height:21px;line-height:21px;text-align:center;white-space:nowrap;color:#000;font-size:12px;letter-spacing:0.35px;text-align:right;padding-right:3px">Очистить поля адр., дог.</span></div>
<div class="t" style="left:670px;width:300px;text-align:center;top:572px;font-size:12px;line-height:14px;color:#000;">Количество</div>
<div class="t" style="left:670px;width:300px;text-align:center;top:587px;font-size:12px;line-height:14px;color:#000;">жильцов</div>
<div class="t" style="left:749px;width:300px;text-align:center;top:572px;font-size:12px;line-height:14px;color:#000;">Количество</div>
<div class="t" style="left:749px;width:300px;text-align:center;top:587px;font-size:12px;line-height:14px;color:#000;">льготников</div>
<div class="ed" style="left:781px;top:602px;width:79px;height:21px;background:#e8e6e8"><span style="position:absolute;left:2px;right:0;top:2px;height:14px;line-height:14px;text-align:right;white-space:nowrap;overflow:hidden;padding-right:2px;font-size:12px;">96</span></div>
<div class="ed" style="left:860px;top:602px;width:78px;height:21px;background:#e8e6e8"><span style="position:absolute;left:2px;right:0;top:2px;height:14px;line-height:14px;text-align:right;white-space:nowrap;overflow:hidden;padding-right:2px;font-size:12px;">29</span></div>
<div style="left:12px;top:455px;width:758px;height:1px;background:#808080"></div>
<div style="left:12px;top:455px;width:1px;height:257px;background:#808080"></div>
<div style="left:12px;top:711px;width:758px;height:1px;background:#ffffff"></div>
<div style="left:18px;top:480px;width:273px;height:1px;background:#ffffff"></div>
<div style="left:18px;top:480px;width:1px;height:225px;background:#ffffff"></div>
<div style="left:18px;top:704px;width:273px;height:1px;background:#404040"></div>
<div style="left:19px;top:703px;width:272px;height:1px;background:#808080"></div>
<div style="left:113px;top:462px;width:95px;height:19px;background:#d4d0c8;border-top:1px solid #fff;border-left:1px solid #fff;border-right:1px solid #404040;box-shadow:inset -1px 0 #808080"></div>
<div style="left:208px;top:462px;width:95px;height:19px;background:#d4d0c8;border-top:1px solid #fff;border-left:1px solid #fff;border-right:1px solid #404040;box-shadow:inset -1px 0 #808080"></div>
<div style="left:18px;top:480px;width:283px;height:1px;background:#ffffff"></div>
<div style="left:18px;top:459px;width:95px;height:23px;background:#d4d0c8;border-top:1px solid #fff;border-left:1px solid #fff;border-right:1px solid #404040;box-shadow:inset -1px 0 #808080"></div>
<div class="t" style="left:-86px;width:300px;text-align:center;top:465px;font-size:12px;line-height:14px;color:#000;">Счетчики</div>
<div class="t" style="left:10px;width:300px;text-align:center;top:466px;font-size:12px;line-height:14px;color:#000;">Услуги</div>
<div class="t" style="left:224px;top:466px;font-size:12px;line-height:14px;color:#000;letter-spacing:-0.25px">Тарифы 2гр</div>
<div class="t" style="left:275px;top:486px;font-size:12px;line-height:14px;color:#000;">За</div>
<div class="t" style="left:40px;top:501px;font-size:12px;line-height:14px;color:#000;">Ид.</div>
<div class="t" style="left:71px;top:501px;font-size:12px;line-height:14px;color:#000;">Главный</div>
<div class="t" style="left:175px;top:501px;font-size:12px;line-height:14px;color:#000;">Услуга</div>
<div class="t" style="left:237px;top:501px;font-size:12px;line-height:14px;color:#000;">Стоки</div>
<div class="ed" style="left:27px;top:518px;width:45px;height:22px;background:#ffffcc"></div>
<div class="ed" style="left:72px;top:518px;width:47px;height:22px;background:#ffffcc"></div>
<div class="bt" style="left:120px;top:518px;width:23px;height:22px"></div>
<div style="left:126px;top:532px;width:1px;height:1px;background:#000"></div>
<div style="left:130px;top:532px;width:1px;height:1px;background:#000"></div>
<div style="left:134px;top:532px;width:1px;height:1px;background:#000"></div>
<div class="ed" style="left:143px;top:518px;width:98px;height:22px;background:#ffffcc"></div>
<div class="cb" style="left:248px;top:522px;background:#ffffff"></div>
<svg style="position:absolute;left:250px;top:524px" width="9" height="9" viewBox="0 0 9 9"><path d="M1 3.5 L3.5 6 L8 1.5" stroke="#000" stroke-width="1.8" fill="none"/></svg>
<div class="ed" style="left:269px;top:518px;width:52px;height:22px;background:#ffffcc"></div>
<div class="ed" style="left:27px;top:540px;width:45px;height:22px;background:#ffffff"></div>
<div class="ed" style="left:72px;top:540px;width:47px;height:22px;background:#ffffff"></div>
<div class="bt" style="left:120px;top:540px;width:23px;height:22px"></div>
<div style="left:126px;top:554px;width:1px;height:1px;background:#808080"></div>
<div style="left:127px;top:555px;width:1px;height:1px;background:#fff"></div>
<div style="left:130px;top:554px;width:1px;height:1px;background:#808080"></div>
<div style="left:131px;top:555px;width:1px;height:1px;background:#fff"></div>
<div style="left:134px;top:554px;width:1px;height:1px;background:#808080"></div>
<div style="left:135px;top:555px;width:1px;height:1px;background:#fff"></div>
<div class="ed" style="left:143px;top:540px;width:98px;height:22px;background:#ffffff"></div>
<div class="cb" style="left:248px;top:544px;background:#d4d0c8"></div>
<div class="ed" style="left:269px;top:540px;width:52px;height:22px;background:#ffffff"></div>
<div class="ed" style="left:27px;top:563px;width:45px;height:22px;background:#ffffff"></div>
<div class="ed" style="left:72px;top:563px;width:47px;height:22px;background:#ffffff"></div>
<div class="bt" style="left:120px;top:563px;width:23px;height:22px"></div>
<div style="left:126px;top:577px;width:1px;height:1px;background:#808080"></div>
<div style="left:127px;top:578px;width:1px;height:1px;background:#fff"></div>
<div style="left:130px;top:577px;width:1px;height:1px;background:#808080"></div>
<div style="left:131px;top:578px;width:1px;height:1px;background:#fff"></div>
<div style="left:134px;top:577px;width:1px;height:1px;background:#808080"></div>
<div style="left:135px;top:578px;width:1px;height:1px;background:#fff"></div>
<div class="ed" style="left:143px;top:563px;width:98px;height:22px;background:#ffffff"></div>
<div class="cb" style="left:248px;top:567px;background:#d4d0c8"></div>
<div class="ed" style="left:269px;top:563px;width:52px;height:22px;background:#ffffff"></div>
<div class="ed" style="left:27px;top:586px;width:45px;height:22px;background:#ffffff"></div>
<div class="ed" style="left:72px;top:586px;width:47px;height:22px;background:#ffffff"></div>
<div class="bt" style="left:120px;top:586px;width:23px;height:22px"></div>
<div style="left:126px;top:600px;width:1px;height:1px;background:#808080"></div>
<div style="left:127px;top:601px;width:1px;height:1px;background:#fff"></div>
<div style="left:130px;top:600px;width:1px;height:1px;background:#808080"></div>
<div style="left:131px;top:601px;width:1px;height:1px;background:#fff"></div>
<div style="left:134px;top:600px;width:1px;height:1px;background:#808080"></div>
<div style="left:135px;top:601px;width:1px;height:1px;background:#fff"></div>
<div class="ed" style="left:143px;top:586px;width:98px;height:22px;background:#ffffff"></div>
<div class="cb" style="left:248px;top:590px;background:#d4d0c8"></div>
<div class="ed" style="left:269px;top:586px;width:52px;height:22px;background:#ffffff"></div>
<div class="ed" style="left:27px;top:608px;width:45px;height:22px;background:#ffffff"></div>
<div class="ed" style="left:72px;top:608px;width:47px;height:22px;background:#ffffff"></div>
<div class="bt" style="left:120px;top:608px;width:23px;height:22px"></div>
<div style="left:126px;top:622px;width:1px;height:1px;background:#808080"></div>
<div style="left:127px;top:623px;width:1px;height:1px;background:#fff"></div>
<div style="left:130px;top:622px;width:1px;height:1px;background:#808080"></div>
<div style="left:131px;top:623px;width:1px;height:1px;background:#fff"></div>
<div style="left:134px;top:622px;width:1px;height:1px;background:#808080"></div>
<div style="left:135px;top:623px;width:1px;height:1px;background:#fff"></div>
<div class="ed" style="left:143px;top:608px;width:98px;height:22px;background:#ffffff"></div>
<div class="cb" style="left:248px;top:612px;background:#d4d0c8"></div>
<div class="ed" style="left:269px;top:608px;width:52px;height:22px;background:#ffffff"></div>
<div style="left:285px;top:311px;width:515px;height:458px;background:#d4d0c8"></div>
<div style="left:285px;top:311px;width:515px;height:1px;background:#d4d0c8"></div>
<div style="left:285px;top:311px;width:1px;height:458px;background:#d4d0c8"></div>
<div style="left:286px;top:312px;width:513px;height:1px;background:#ffffff"></div>
<div style="left:286px;top:312px;width:1px;height:457px;background:#ffffff"></div>
<div style="left:799px;top:311px;width:1px;height:458px;background:#404040"></div>
<div style="left:798px;top:312px;width:1px;height:457px;background:#808080"></div>
<div style="left:289px;top:315px;width:507px;height:18px;background:#0a246a"></div>
<div class="t" style="left:309px;top:318px;font-size:11px;line-height:13px;color:#fff;font-weight:bold;-webkit-text-stroke:0.25px #fff;letter-spacing:0.3px">Операции по лицевому счету</div>
<div class="bt" style="left:744px;top:317px;width:16px;height:14px"></div>
<div style="left:748px;top:326px;width:6px;height:2px;background:#000"></div>
<div class="bt" style="left:760px;top:317px;width:16px;height:14px"></div>
<div style="left:763px;top:319px;width:9px;height:2px;background:#000"></div>
<div style="left:763px;top:319px;width:1px;height:9px;background:#000"></div>
<div style="left:771px;top:319px;width:1px;height:9px;background:#000"></div>
<div style="left:763px;top:327px;width:9px;height:1px;background:#000"></div>
<div class="bt" style="left:778px;top:317px;width:16px;height:14px"></div>
<svg style="position:absolute;left:782px;top:320px" width="8" height="7" viewBox="0 0 8 7"><path d="M0.5 0.5 L7.5 6.5 M7.5 0.5 L0.5 6.5" stroke="#000" stroke-width="1.6" fill="none"/></svg>
<div style="left:295px;top:346px;width:492px;height:1px;background:#808080"></div>
<div style="left:295px;top:346px;width:1px;height:407px;background:#808080"></div>
<div style="left:295px;top:752px;width:492px;height:1px;background:#808080"></div>
<div style="left:786px;top:346px;width:1px;height:407px;background:#808080"></div>
<div style="left:296px;top:347px;width:490px;height:1px;background:#ffffff"></div>
<div style="left:296px;top:347px;width:1px;height:405px;background:#ffffff"></div>
<div style="left:295px;top:753px;width:493px;height:1px;background:#ffffff"></div>
<div style="left:787px;top:346px;width:1px;height:408px;background:#ffffff"></div>
<div class="t" style="left:304px;top:340px;padding:0 2px;background:#d4d0c8;font-size:12px;line-height:14px">Операции</div>
<div class="t" style="left:196px;width:300px;text-align:center;top:362px;font-size:12px;line-height:14px;color:#000;">До даты</div>
<div class="t" style="left:288px;width:300px;text-align:center;top:362px;font-size:12px;line-height:14px;color:#000;">До даты</div>
<div class="ed" style="left:302px;top:383px;width:91px;height:19px;background:#e8e6e8"><span style="position:absolute;left:2px;right:0;top:2px;height:14px;line-height:14px;text-align:left;white-space:nowrap;overflow:hidden;padding-right:0px;font-size:12px;">01.07.2008</span></div>
<div class="ed" style="left:393px;top:383px;width:91px;height:19px;background:#e8e6e8"><span style="position:absolute;left:2px;right:0;top:2px;height:14px;line-height:14px;text-align:left;white-space:nowrap;overflow:hidden;padding-right:0px;font-size:12px;">01.07.2008</span></div>
<div class="cb" style="left:641px;top:387px;background:#ffffff"></div>
<svg style="position:absolute;left:643px;top:389px" width="9" height="9" viewBox="0 0 9 9"><path d="M1 3.5 L3.5 6 L8 1.5" stroke="#000" stroke-width="1.8" fill="none"/></svg>
<div class="t" style="left:659px;top:386px;font-size:12px;line-height:14px;color:#000;">Вся оплата</div>
<div class="t" style="left:304px;top:406px;font-size:12px;line-height:14px;color:#000;letter-spacing:0.15px">Дата операции</div>
<div class="t" style="left:395px;top:406px;font-size:12px;line-height:14px;color:#000;letter-spacing:0.25px">Расчет. период</div>
<div class="t" style="left:380px;width:300px;text-align:center;top:406px;font-size:12px;line-height:14px;color:#000;">Начисление</div>
<div class="t" style="left:474px;width:300px;text-align:center;top:406px;font-size:12px;line-height:14px;color:#000;">Оплата</div>
<div class="t" style="left:568px;width:300px;text-align:center;top:406px;font-size:12px;line-height:14px;color:#000;">Подитог</div>
<div class="ed" style="left:302px;top:427px;width:91px;height:19px;background:#ffffcc"></div>
<div style="left:304px;top:429px;width:64px;height:14px;background:#0a246a;color:#fff;font-size:12px;line-height:14px;padding-left:1px;padding-top:0px;white-space:nowrap">01.04.2008</div>
<div class="ed" style="left:393px;top:427px;width:91px;height:19px;background:#ffffcc"><span style="position:absolute;left:2px;right:0;top:1px;height:14px;line-height:14px;text-align:left;white-space:nowrap;overflow:hidden;padding-right:0px;font-size:12px;">04.2008</span></div>
<div class="ed" style="left:484px;top:427px;width:93px;height:19px;background:#ffffcc"><span style="position:absolute;left:2px;right:0;top:1px;height:14px;line-height:14px;text-align:right;white-space:nowrap;overflow:hidden;padding-right:2px;font-size:12px;">269,95</span></div>
<div class="ed" style="left:577px;top:427px;width:95px;height:19px;background:#ffffcc"><span style="position:absolute;left:2px;right:0;top:1px;height:14px;line-height:14px;text-align:right;white-space:nowrap;overflow:hidden;padding-right:2px;font-size:12px;">0</span></div>
<div class="ed" style="left:672px;top:427px;width:93px;height:19px;background:#ffffcc"><span style="position:absolute;left:2px;right:0;top:1px;height:14px;line-height:14px;text-align:right;white-space:nowrap;overflow:hidden;padding-right:2px;font-size:12px;">886,50</span></div>
<div class="ed" style="left:302px;top:446px;width:91px;height:18px;background:#e8e6e8"><span style="position:absolute;left:2px;right:0;top:1px;height:14px;line-height:14px;text-align:left;white-space:nowrap;overflow:hidden;padding-right:0px;font-size:12px;">01.04.2008</span></div>
<div class="ed" style="left:393px;top:446px;width:91px;height:18px;background:#e8e6e8"><span style="position:absolute;left:2px;right:0;top:1px;height:14px;line-height:14px;text-align:left;white-space:nowrap;overflow:hidden;padding-right:0px;font-size:12px;">03.2008</span></div>
<div class="ed" style="left:484px;top:446px;width:93px;height:18px;background:#e8e6e8"><span style="position:absolute;left:2px;right:0;top:1px;height:14px;line-height:14px;text-align:right;white-space:nowrap;overflow:hidden;padding-right:2px;font-size:12px;">238,61</span></div>
<div class="ed" style="left:577px;top:446px;width:95px;height:18px;background:#e8e6e8"><span style="position:absolute;left:2px;right:0;top:1px;height:14px;line-height:14px;text-align:right;white-space:nowrap;overflow:hidden;padding-right:2px;font-size:12px;">0</span></div>
<div class="ed" style="left:672px;top:446px;width:93px;height:18px;background:#e8e6e8"><span style="position:absolute;left:2px;right:0;top:1px;height:14px;line-height:14px;text-align:right;white-space:nowrap;overflow:hidden;padding-right:2px;font-size:12px;">616,55</span></div>
<div class="ed" style="left:302px;top:464px;width:91px;height:19px;background:#e8e6e8"><span style="position:absolute;left:2px;right:0;top:1px;height:14px;line-height:14px;text-align:left;white-space:nowrap;overflow:hidden;padding-right:0px;font-size:12px;">01.04.2008</span></div>
<div class="ed" style="left:393px;top:464px;width:91px;height:19px;background:#e8e6e8"><span style="position:absolute;left:2px;right:0;top:1px;height:14px;line-height:14px;text-align:left;white-space:nowrap;overflow:hidden;padding-right:0px;font-size:12px;">02.2008</span></div>
<div class="ed" style="left:484px;top:464px;width:93px;height:19px;background:#e8e6e8"><span style="position:absolute;left:2px;right:0;top:1px;height:14px;line-height:14px;text-align:right;white-space:nowrap;overflow:hidden;padding-right:2px;font-size:12px;">161,97</span></div>
<div class="ed" style="left:577px;top:464px;width:95px;height:19px;background:#e8e6e8"><span style="position:absolute;left:2px;right:0;top:1px;height:14px;line-height:14px;text-align:right;white-space:nowrap;overflow:hidden;padding-right:2px;font-size:12px;">0</span></div>
<div class="ed" style="left:672px;top:464px;width:93px;height:19px;background:#e8e6e8"><span style="position:absolute;left:2px;right:0;top:1px;height:14px;line-height:14px;text-align:right;white-space:nowrap;overflow:hidden;padding-right:2px;font-size:12px;">377,94</span></div>
<div class="ed" style="left:302px;top:483px;width:91px;height:18px;background:#e8e6e8"><span style="position:absolute;left:2px;right:0;top:1px;height:14px;line-height:14px;text-align:left;white-space:nowrap;overflow:hidden;padding-right:0px;font-size:12px;">01.04.2008</span></div>
<div class="ed" style="left:393px;top:483px;width:91px;height:18px;background:#e8e6e8"><span style="position:absolute;left:2px;right:0;top:1px;height:14px;line-height:14px;text-align:left;white-space:nowrap;overflow:hidden;padding-right:0px;font-size:12px;">01.2008</span></div>
<div class="ed" style="left:484px;top:483px;width:93px;height:18px;background:#e8e6e8"><span style="position:absolute;left:2px;right:0;top:1px;height:14px;line-height:14px;text-align:right;white-space:nowrap;overflow:hidden;padding-right:2px;font-size:12px;">215,97</span></div>
<div class="ed" style="left:577px;top:483px;width:95px;height:18px;background:#e8e6e8"><span style="position:absolute;left:2px;right:0;top:1px;height:14px;line-height:14px;text-align:right;white-space:nowrap;overflow:hidden;padding-right:2px;font-size:12px;">0</span></div>
<div class="ed" style="left:672px;top:483px;width:93px;height:18px;background:#e8e6e8"><span style="position:absolute;left:2px;right:0;top:1px;height:14px;line-height:14px;text-align:right;white-space:nowrap;overflow:hidden;padding-right:2px;font-size:12px;">215,97</span></div>
<div class="ed" style="left:302px;top:501px;width:91px;height:19px;background:#e8e6e8"></div>
<div class="ed" style="left:393px;top:501px;width:91px;height:19px;background:#e8e6e8"></div>
<div class="ed" style="left:484px;top:501px;width:93px;height:19px;background:#e8e6e8"></div>
<div class="ed" style="left:577px;top:501px;width:95px;height:19px;background:#e8e6e8"></div>
<div class="ed" style="left:672px;top:501px;width:93px;height:19px;background:#e8e6e8"></div>
<div class="ed" style="left:302px;top:520px;width:91px;height:18px;background:#e8e6e8"></div>
<div class="ed" style="left:393px;top:520px;width:91px;height:18px;background:#e8e6e8"></div>
<div class="ed" style="left:484px;top:520px;width:93px;height:18px;background:#e8e6e8"></div>
<div class="ed" style="left:577px;top:520px;width:95px;height:18px;background:#e8e6e8"></div>
<div class="ed" style="left:672px;top:520px;width:93px;height:18px;background:#e8e6e8"></div>
<div class="ed" style="left:302px;top:538px;width:91px;height:19px;background:#e8e6e8"></div>
<div class="ed" style="left:393px;top:538px;width:91px;height:19px;background:#e8e6e8"></div>
<div class="ed" style="left:484px;top:538px;width:93px;height:19px;background:#e8e6e8"></div>
<div class="ed" style="left:577px;top:538px;width:95px;height:19px;background:#e8e6e8"></div>
<div class="ed" style="left:672px;top:538px;width:93px;height:19px;background:#e8e6e8"></div>
<div class="ed" style="left:302px;top:557px;width:91px;height:19px;background:#e8e6e8"></div>
<div class="ed" style="left:393px;top:557px;width:91px;height:19px;background:#e8e6e8"></div>
<div class="ed" style="left:484px;top:557px;width:93px;height:19px;background:#e8e6e8"></div>
<div class="ed" style="left:577px;top:557px;width:95px;height:19px;background:#e8e6e8"></div>
<div class="ed" style="left:672px;top:557px;width:93px;height:19px;background:#e8e6e8"></div>
<div class="ed" style="left:302px;top:576px;width:91px;height:18px;background:#e8e6e8"></div>
<div class="ed" style="left:393px;top:576px;width:91px;height:18px;background:#e8e6e8"></div>
<div class="ed" style="left:484px;top:576px;width:93px;height:18px;background:#e8e6e8"></div>
<div class="ed" style="left:577px;top:576px;width:95px;height:18px;background:#e8e6e8"></div>
<div class="ed" style="left:672px;top:576px;width:93px;height:18px;background:#e8e6e8"></div>
<div class="ed" style="left:302px;top:594px;width:91px;height:19px;background:#e8e6e8"></div>
<div class="ed" style="left:393px;top:594px;width:91px;height:19px;background:#e8e6e8"></div>
<div class="ed" style="left:484px;top:594px;width:93px;height:19px;background:#e8e6e8"></div>
<div class="ed" style="left:577px;top:594px;width:95px;height:19px;background:#e8e6e8"></div>
<div class="ed" style="left:672px;top:594px;width:93px;height:19px;background:#e8e6e8"></div>
<div class="ed" style="left:302px;top:613px;width:91px;height:18px;background:#e8e6e8"></div>
<div class="ed" style="left:393px;top:613px;width:91px;height:18px;background:#e8e6e8"></div>
<div class="ed" style="left:484px;top:613px;width:93px;height:18px;background:#e8e6e8"></div>
<div class="ed" style="left:577px;top:613px;width:95px;height:18px;background:#e8e6e8"></div>
<div class="ed" style="left:672px;top:613px;width:93px;height:18px;background:#e8e6e8"></div>
<div class="ed" style="left:302px;top:631px;width:91px;height:19px;background:#e8e6e8"></div>
<div class="ed" style="left:393px;top:631px;width:91px;height:19px;background:#e8e6e8"></div>
<div class="ed" style="left:484px;top:631px;width:93px;height:19px;background:#e8e6e8"></div>
<div class="ed" style="left:577px;top:631px;width:95px;height:19px;background:#e8e6e8"></div>
<div class="ed" style="left:672px;top:631px;width:93px;height:19px;background:#e8e6e8"></div>
<div class="ed" style="left:302px;top:650px;width:91px;height:18px;background:#e8e6e8"></div>
<div class="ed" style="left:393px;top:650px;width:91px;height:18px;background:#e8e6e8"></div>
<div class="ed" style="left:484px;top:650px;width:93px;height:18px;background:#e8e6e8"></div>
<div class="ed" style="left:577px;top:650px;width:95px;height:18px;background:#e8e6e8"></div>
<div class="ed" style="left:672px;top:650px;width:93px;height:18px;background:#e8e6e8"></div>
<div class="ed" style="left:302px;top:668px;width:91px;height:19px;background:#e8e6e8"></div>
<div class="ed" style="left:393px;top:668px;width:91px;height:19px;background:#e8e6e8"></div>
<div class="ed" style="left:484px;top:668px;width:93px;height:19px;background:#e8e6e8"></div>
<div class="ed" style="left:577px;top:668px;width:95px;height:19px;background:#e8e6e8"></div>
<div class="ed" style="left:672px;top:668px;width:93px;height:19px;background:#e8e6e8"></div>
<div class="ed" style="left:302px;top:687px;width:91px;height:19px;background:#e8e6e8"></div>
<div class="ed" style="left:393px;top:687px;width:91px;height:19px;background:#e8e6e8"></div>
<div class="ed" style="left:484px;top:687px;width:93px;height:19px;background:#e8e6e8"></div>
<div class="ed" style="left:577px;top:687px;width:95px;height:19px;background:#e8e6e8"></div>
<div class="ed" style="left:672px;top:687px;width:93px;height:19px;background:#e8e6e8"></div>
<div style="left:765px;top:427px;width:21px;height:278px;background-color:#fff;background-image:linear-gradient(45deg,#d4d0c8 25%,transparent 25%,transparent 75%,#d4d0c8 75%),linear-gradient(45deg,#d4d0c8 25%,transparent 25%,transparent 75%,#d4d0c8 75%);background-size:2px 2px;background-position:0 0,1px 1px"></div>
<div class="bt" style="left:766px;top:426px;width:20px;height:17px"></div>
<div class="bt" style="left:766px;top:689px;width:20px;height:17px"></div>
<svg style="left:771px;top:431px" width="9" height="6"><path d="M4.5 1 L8 5 L1 5 Z" fill="#808080"/></svg>
<svg style="left:771px;top:694px" width="9" height="6"><path d="M1 1 L8 1 L4.5 5 Z" fill="#808080"/></svg>
<div class="t" style="left:484px;top:712px;font-size:12px;line-height:14px;color:#000;">Всего начислено</div>
<div class="t" style="left:580px;top:712px;font-size:12px;line-height:14px;color:#000;">Всего оплачено</div>
<div class="t" style="left:568px;width:300px;text-align:center;top:712px;font-size:12px;line-height:14px;color:#000;">Долг</div>
<div class="ed" style="left:485px;top:727px;width:94px;height:19px;background:#e8e6e8"><span style="position:absolute;left:2px;right:0;top:2px;height:14px;line-height:14px;text-align:right;white-space:nowrap;overflow:hidden;padding-right:2px;font-size:12px;">886,50</span></div>
<div class="ed" style="left:579px;top:727px;width:93px;height:19px;background:#e8e6e8"><span style="position:absolute;left:2px;right:0;top:2px;height:14px;line-height:14px;text-align:right;white-space:nowrap;overflow:hidden;padding-right:2px;font-size:12px;">0,00</span></div>
<div class="ed" style="left:673px;top:727px;width:92px;height:19px;background:#e8e6e8"><span style="position:absolute;left:2px;right:0;top:2px;height:14px;line-height:14px;text-align:right;white-space:nowrap;overflow:hidden;padding-right:2px;font-size:12px;">886,50</span></div>
<svg style="left:7px;top:7px" width="16" height="15" viewBox="0 0 16 15"><g shape-rendering="crispEdges"><rect x="1" y="0" width="14" height="12" fill="#e8e8ff"/><rect x="1" y="0" width="14" height="1" fill="#000"/><path d="M8 3 L13 9 L8 9 Z" fill="#1010d0"/><rect x="4" y="2" width="3" height="2" fill="#202060"/><rect x="9" y="2" width="3" height="1" fill="#202060"/><rect x="6" y="5" width="2" height="7" fill="#000"/></g><path d="M4 3 L1 8 L4 8 L1 14 L7 7 L4 7 L6 3 Z" fill="#f0f040" stroke="#202000" stroke-width="0.8"/></svg>
<svg style="left:11px;top:80px" width="13" height="13" viewBox="0 0 13 13"><path d="M2 5 C2 1 10 0 11 4" stroke="#30c0a0" stroke-width="1.6" fill="none"/><path d="M6 11 C9 12 12 10 11 7" stroke="#30c0a0" stroke-width="1.6" fill="none"/><rect x="1" y="6" width="5" height="5" fill="#a0e0ff"/><rect x="1.5" y="7" width="4" height="3.5" fill="#0000b0"/><circle cx="5.5" cy="3" r="2.2" fill="#c01090"/><path d="M9 4.5 L11.5 9.5 L6.5 9.5 Z" fill="#c00020"/></svg>
<svg style="left:291px;top:316px" width="13" height="13" viewBox="0 0 13 13"><rect x="0" y="0" width="12" height="12" fill="#50c8d0"/><path d="M2 5 C2 1 10 0 11 4" stroke="#30c0a0" stroke-width="1.6" fill="none"/><path d="M6 11 C9 12 12 10 11 7" stroke="#30c0a0" stroke-width="1.6" fill="none"/><rect x="1" y="6" width="5" height="5" fill="#a0e0ff"/><rect x="1.5" y="7" width="4" height="3.5" fill="#0000b0"/><circle cx="5.5" cy="3" r="2.2" fill="#c01090"/><path d="M9 4.5 L11.5 9.5 L6.5 9.5 Z" fill="#c00020"/></svg>
<svg style="left:9px;top:48px" width="16" height="16" viewBox="0 0 16 16"><g shape-rendering="crispEdges"><rect x="0" y="0" width="16" height="16" fill="#000"/><rect x="1" y="1" width="14" height="14" fill="#e0e020"/><rect x="3" y="1" width="9" height="6" fill="#fff"/><rect x="3" y="9" width="10" height="6" fill="#000"/><rect x="8" y="10" width="3" height="4" fill="#fff"/></g></svg>
<svg style="left:30px;top:46px" width="16" height="17" viewBox="0 0 16 17"><path d="M4.5 13.5 A6.2 6.2 0 1 1 12 13.8" stroke="#0a5a0a" stroke-width="3.2" fill="none"/><path d="M1 10 L9 10 L5 16 Z" fill="#0a5a0a"/></svg>
<svg style="left:59px;top:46px" width="32" height="16" viewBox="0 0 32 16"><ellipse cx="4.5" cy="2" rx="4.2" ry="1.8" fill="#f0f040" stroke="#000" stroke-width="1"/><path d="M0.3 2 V7.5 A4.2 1.8 0 0 0 8.7 7.5 V2" fill="#f0f040" stroke="#000" stroke-width="1"/><path d="M0.5 4.5 A4.2 1.8 0 0 0 8.5 4.5 M0.5 6.3 A4.2 1.8 0 0 0 8.5 6.3" stroke="#000" stroke-width="0.8" fill="none"/><text x="11" y="9" font-family="Liberation Sans" font-weight="bold" font-size="11" fill="#1818a0">?</text><path d="M6 10 L9 13 L17 13" stroke="#000" stroke-width="1.4" fill="none"/><path d="M16 10 L20 13 L16 16 Z" fill="#000"/><g shape-rendering="crispEdges"><rect x="19" y="6" width="10" height="10" fill="#000"/><rect x="20" y="8" width="8" height="7" fill="#f0f040"/><rect x="21" y="10" width="6" height="1" fill="#000"/><rect x="21" y="12" width="6" height="1" fill="#000"/><rect x="20" y="7" width="8" height="1" fill="#000080"/></g></svg>
<svg style="left:93px;top:46px" width="24" height="18" viewBox="0 0 24 18"><path d="M3 8.5 L7.5 13 L15 4" stroke="#e00018" stroke-width="2.6" fill="none"/></svg>
<svg style="left:117px;top:46px" width="24" height="18" viewBox="0 0 24 18"><circle cx="11" cy="9" r="6.5" stroke="#e00000" stroke-width="2.4" fill="none"/><path d="M6.5 4.5 L15.5 13.5" stroke="#e00000" stroke-width="2.4"/></svg>
<svg style="left:150px;top:46px" width="18" height="17" viewBox="0 0 18 17"><path d="M5.5 1.5 L14.5 1.5 L13.5 7.5 L3.5 7.5 Z" fill="#fff" stroke="#000" stroke-width="1"/><path d="M6 3.5 H13 M5 5.5 H12" stroke="#000" stroke-width="1"/><rect x="1.5" y="7.5" width="15" height="8" rx="2" fill="#d4d0c8" stroke="#000" stroke-width="1"/><rect x="2" y="8" width="14" height="2" fill="#303030"/><rect x="2.5" y="10.5" width="13" height="2" fill="#a0a0a0"/><rect x="2" y="12.5" width="14" height="1" fill="#000"/><path d="M15 9 V14" stroke="#606060" stroke-width="1" stroke-dasharray="1 1"/></svg>
<svg style="left:173px;top:46px" width="20" height="18" viewBox="0 0 20 18"><path d="M4.5 0.5 L15 0.5 L18.5 4 L18.5 17.5 L4.5 17.5 Z" fill="#f4f4ff" stroke="#000" stroke-width="1"/><path d="M15 0.5 L15 4 L18.5 4" fill="#fff" stroke="#000" stroke-width="1"/><path d="M9 14 H11 M13 14 H16 M12 11 H16" stroke="#80c080" stroke-width="1"/><path d="M1.5 2.5 L11 11.5 M11 2.5 L2 11.5" stroke="#209020" stroke-width="4.2"/><path d="M1.5 2.5 L11 11.5" stroke="#80e080" stroke-width="0.8"/></svg>
<svg style="left:204px;top:47px" width="20" height="17" viewBox="0 0 20 17"><path d="M8.5 8.5 L19 1 M8.5 8.5 L19 16" stroke="#000" stroke-width="2.6"/><path d="M9 8.5 L18.5 1.8 M9 8.5 L18.5 15.2" stroke="#fff" stroke-width="1.2"/><ellipse cx="4" cy="4" rx="3.2" ry="2.6" transform="rotate(25 4 4)" fill="none" stroke="#000" stroke-width="1.8"/><ellipse cx="4" cy="12.5" rx="3.2" ry="2.6" transform="rotate(-25 4 12.5)" fill="none" stroke="#000" stroke-width="1.8"/><path d="M6.5 6 L9 8.5 L6.5 11" stroke="#000" stroke-width="1.6" fill="none"/></svg>
<svg style="left:229px;top:47px" width="18" height="17" viewBox="0 0 18 17"><g shape-rendering="crispEdges"><rect x="1.5" y="1.5" width="8" height="11" fill="#f8f8f8" stroke="#c0c0c0"/><rect x="3" y="3" width="4" height="1" fill="#8080a0"/><rect x="3" y="5" width="4" height="1" fill="#8080a0"/><rect x="3" y="7" width="4" height="1" fill="#8080a0"/><rect x="3" y="9" width="4" height="1" fill="#8080a0"/></g><path d="M7.5 3.5 L13 3.5 L16.5 7 L16.5 16.5 L7.5 16.5 Z" fill="#fff" stroke="#000" stroke-width="1"/><g shape-rendering="crispEdges"><rect x="9" y="7" width="4" height="1" fill="#0000c0"/><rect x="9" y="9" width="6" height="1" fill="#0000c0"/><rect x="9" y="11" width="6" height="1" fill="#0000c0"/><rect x="9" y="13" width="6" height="1" fill="#0000c0"/></g></svg>
<svg style="left:253px;top:45px" width="19" height="19" viewBox="0 0 19 19"><g shape-rendering="crispEdges"><rect x="1" y="3" width="10" height="14" fill="#a8a8b0"/></g><path d="M4 4.5 L6.5 1.5 L9.5 4.5 L11.5 4.5 L11.5 6 L2 6 L2 4.5 Z" fill="#f0e040" stroke="#000" stroke-width="1"/><path d="M8.5 7.5 L14 7.5 L17.5 11 L17.5 17.5 L8.5 17.5 Z" fill="#fff" stroke="#000" stroke-width="1"/><g shape-rendering="crispEdges"><rect x="10" y="11" width="4" height="1" fill="#0000c0"/><rect x="10" y="13" width="6" height="1" fill="#0000c0"/><rect x="10" y="15" width="6" height="1" fill="#0000c0"/></g></svg>
<svg style="left:283px;top:47px" width="19" height="16" viewBox="0 0 19 16"><g shape-rendering="crispEdges"><rect x="0.5" y="0.5" width="16" height="4" fill="#fff" stroke="#303030"/><rect x="7" y="3" width="5" height="13" fill="#004000"/><rect x="3" y="7" width="13" height="5" fill="#004000"/><rect x="8" y="4" width="3" height="11" fill="#10b020"/><rect x="4" y="8" width="11" height="3" fill="#10b020"/></g></svg>
<svg style="left:307px;top:47px" width="19" height="16" viewBox="0 0 19 16"><g shape-rendering="crispEdges"><rect x="0.5" y="0.5" width="16" height="4" fill="#fff" stroke="#303030"/></g><path d="M5.5 6 L14.5 14.5 M14.5 6 L5.5 14.5" stroke="#c00000" stroke-width="3"/></svg>
<svg style="left:337px;top:46px" width="19" height="16" viewBox="0 0 19 16"><g shape-rendering="crispEdges"><rect x="1" y="3" width="5" height="12" fill="#000"/><rect x="8" y="3" width="5" height="12" fill="#000"/><rect x="5" y="5" width="4" height="5" fill="#000"/><rect x="2" y="1" width="3" height="3" fill="#000"/><rect x="9" y="1" width="3" height="3" fill="#000"/><rect x="2" y="9" width="2" height="4" fill="#fff"/><rect x="9" y="9" width="2" height="4" fill="#fff"/></g><text x="13" y="7" font-family="Liberation Sans" font-size="7" fill="#000">?</text></svg>
<svg style="left:363px;top:48px" width="13" height="13" viewBox="0 0 13 13"><path d="M6 1 L11.5 7 L8 7 L8 12 L4 12 L4 7 L0.5 7 Z" fill="#000"/></svg>
<svg style="left:388px;top:48px" width="13" height="13" viewBox="0 0 13 13"><path d="M4 1 L8 1 L8 6 L11.5 6 L6 12 L0.5 6 L4 6 Z" fill="#000"/></svg>
<svg style="left:415px;top:46px" width="15" height="16" viewBox="0 0 15 16"><ellipse cx="7.5" cy="2.5" rx="6.5" ry="2" fill="#707030" stroke="#000" stroke-width="1"/><path d="M1 3 L3 14.5 L12 14.5 L14 3" fill="#f0f0e8" stroke="#000" stroke-width="1"/><path d="M10 4 L13.5 3.5 L12 14 L9 14.5 Z" fill="#606020"/><path d="M5 6 V13 M7.5 6 V13" stroke="#808080" stroke-width="1"/></svg>
<svg style="left:442px;top:46px" width="16" height="17" viewBox="0 0 16 17"><g shape-rendering="crispEdges"><rect x="1.5" y="2.5" width="12" height="13" fill="#d4d0c8" stroke="#000"/><rect x="3.5" y="4.5" width="8" height="9" fill="#fff" stroke="#000"/><rect x="5" y="6" width="5" height="1" fill="#0000c0"/><rect x="5" y="8" width="5" height="1" fill="#0000c0"/><rect x="5" y="10" width="5" height="1" fill="#0000c0"/><rect x="5" y="0.5" width="5" height="3" fill="#f0e040" stroke="#000"/></g></svg>
<svg style="left:471px;top:47px" width="19" height="16" viewBox="0 0 19 16"><g shape-rendering="crispEdges"><rect x="8.5" y="3.5" width="9" height="11" fill="#fff" stroke="#000"/><rect x="10" y="6" width="6" height="1" fill="#000"/><rect x="10" y="8" width="6" height="1" fill="#000"/><rect x="10" y="10" width="6" height="1" fill="#000"/></g><path d="M2 2 L12 12" stroke="#000" stroke-width="4"/><path d="M2 2 L12 12" stroke="#f0e040" stroke-width="2.4"/><path d="M1 1 L3.5 3.5" stroke="#e080a0" stroke-width="3.2"/><path d="M12 12 L14 14" stroke="#000" stroke-width="2"/></svg>
<svg style="left:498px;top:46px" width="18" height="18" viewBox="0 0 18 18"><g shape-rendering="crispEdges"><rect x="1.5" y="1.5" width="11" height="11" fill="#d4d0c8" stroke="#202020"/><rect x="3" y="3" width="8" height="8" fill="none" stroke="#c04040"/><rect x="5.5" y="5.5" width="11" height="11" fill="#d4d0c8" stroke="#202020"/><rect x="7" y="7" width="8" height="8" fill="#f0f0f0" stroke="#c04040"/><rect x="9" y="9" width="1" height="5" fill="#d00000"/><rect x="9" y="9" width="3" height="1" fill="#d00000"/><rect x="9" y="11" width="2" height="1" fill="#d00000"/><rect x="13" y="9" width="1" height="5" fill="#d00000"/></g></svg>
<svg style="left:533px;top:48px" width="12" height="16" viewBox="0 0 12 16"><text x="1" y="14" font-family="Liberation Sans" font-weight="bold" font-size="14" fill="#0000d0">?</text></svg>
<svg style="left:556px;top:47px" width="16" height="16" viewBox="0 0 16 16"><g shape-rendering="crispEdges"><rect x="8" y="0" width="6" height="15" fill="#000"/><rect x="9" y="1" width="4" height="13" fill="#d4d0c8"/><rect x="1" y="0" width="9" height="15" fill="#e00000"/><rect x="1" y="0" width="1" height="15" fill="#800000"/><rect x="3" y="7" width="1" height="2" fill="#400000"/></g></svg>
<svg style="left:586px;top:47px" width="20" height="17" viewBox="0 0 20 17"><g shape-rendering="crispEdges"><rect x="6" y="1" width="5" height="7" fill="#0000e0"/><rect x="4" y="2" width="8" height="5" fill="#0000e0"/><rect x="0" y="2" width="4" height="1" fill="#0000e0"/><rect x="0" y="5" width="4" height="1" fill="#0000e0"/><rect x="7" y="2" width="2" height="2" fill="#8080ff"/></g><path d="M11.5 4.5 C15.5 4.5 16 9.5 12 10.5 L6 10.5 C4 10.5 4 12 4 14.5" stroke="#000" stroke-width="1.8" fill="none"/><path d="M12 5.5 C15 6 15 9 12 9.5" stroke="#e0d060" stroke-width="0.8" fill="none"/></svg>
<svg style="left:158px;top:424px" width="18" height="16" viewBox="0 0 18 16"><path d="M2.5 4.5 L11.5 4.5 L11.5 12.5 L2.5 12.5 Z" fill="#f0f050" stroke="#000" stroke-width="1"/><path d="M2.5 13.5 L5 8.5 L15.5 8.5 L12.5 13.5 Z" fill="#e8e840" stroke="#000" stroke-width="1.2"/><path d="M9 2.5 C10 1 13 1 14 3.5" stroke="#000" stroke-width="1.2" fill="none"/><path d="M12 3.5 L14.5 5.5 L15 2.5 Z" fill="#000"/></svg>
</body></html>
